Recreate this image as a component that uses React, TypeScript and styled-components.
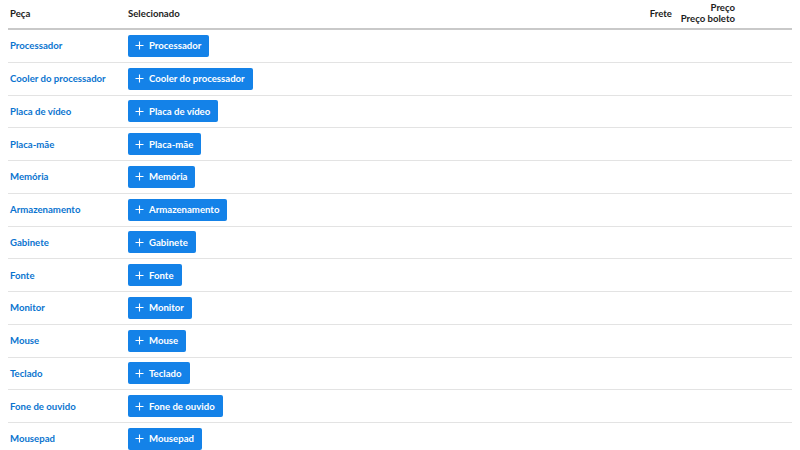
import styled, { createGlobalStyle } from "styled-components"

const Global = createGlobalStyle`
    body {
        margin: 0;
        padding: 0 8px;
        background: #ffffff;
        font-family: "Lato", "Noto Sans", sans-serif;
    }
`

const Table = styled.div`
    display: flex;
    flex-direction: column;
    width: 100%;
`

const Row = styled.div<{ $head?: boolean }>`
    display: grid;
    grid-template-columns: 118px 1fr 40px 63px 55px;
    align-items: center;
    height: ${(p) => (p.$head ? "28px" : "31.75px")};
    border-bottom: ${(p) => (p.$head ? "2px solid #c9c9c9" : "1px solid #e3e3e3")};
`

const Head = styled.div<{ $right?: boolean }>`
    padding: 0 2px;
    font-size: 9.6px;
    font-weight: 700;
    line-height: 11px;
    color: #1d1d1d;
    text-align: ${(p) => (p.$right ? "right" : "left")};
    margin-top: -2px;
`

const Label = styled.div`
    padding: 0 2px;
    font-size: 9.6px;
    font-weight: 700;
    color: #0a74cf;
`

const Cell = styled.div`
    padding: 0 2px;
    display: flex;
    align-items: center;
`

const AddButton = styled.button`
    display: inline-flex;
    align-items: center;
    gap: 5px;
    height: 22px;
    padding: 0 8px 0 7px;
    border: none;
    border-radius: 2px;
    background-color: #1482e8;
    color: #ffffff;
    font-family: inherit;
    font-size: 9.6px;
    font-weight: 700;
    cursor: pointer;
`

const Plus = () => (
    <svg width="9" height="9" viewBox="0 0 9 9">
        <path d="M4.5 0.5v8M0.5 4.5h8" stroke="#fff" strokeWidth="1.1" fill="none" />
    </svg>
)

const pecas = [
    "Processador",
    "Cooler do processador",
    "Placa de vídeo",
    "Placa-mãe",
    "Memória",
    "Armazenamento",
    "Gabinete",
    "Fonte",
    "Monitor",
    "Mouse",
    "Teclado",
    "Fone de ouvido",
    "Mousepad",
]

export default function App() {
    return (
        <>
            <Global />
            <Table>
                <Row $head>
                    <Head>Peça</Head>
                    <Head>Selecionado</Head>
                    <Head $right>Frete</Head>
                    <Head $right>
                        Preço
                        <br />
                        Preço boleto
                    </Head>
                    <Head />
                </Row>
                {pecas.map((nome) => (
                    <Row key={nome}>
                        <Label>{nome}</Label>
                        <Cell>
                            <AddButton>
                                <Plus />
                                {nome}
                            </AddButton>
                        </Cell>
                        <Cell />
                        <Cell />
                        <Cell />
                    </Row>
                ))}
            </Table>
        </>
    )
}
